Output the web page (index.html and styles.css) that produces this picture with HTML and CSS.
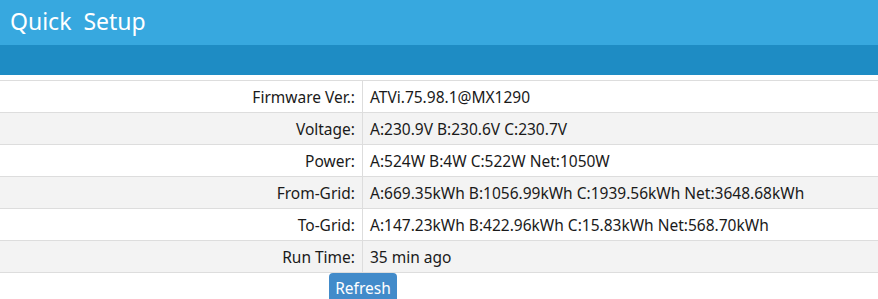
FILE: index.html
```html
<!DOCTYPE html>
<html>
<head>
    <title>Quick Setup</title>
    <link rel="stylesheet" href="styles.css">
</head>
<body>
    <div class="header">
        <h1>Quick&nbsp; Setup</h1>
    </div>
    <div class="subbar"></div>

    <table class="info">
        <tr>
            <td class="label">Firmware Ver.:</td>
            <td>ATVi.75.98.1@MX1290</td>
        </tr>
        <tr>
            <td class="label">Voltage:</td>
            <td>A:230.9V B:230.6V C:230.7V</td>
        </tr>
        <tr>
            <td class="label">Power:</td>
            <td>A:524W B:4W C:522W Net:1050W</td>
        </tr>
        <tr>
            <td class="label">From-Grid:</td>
            <td>A:669.35kWh B:1056.99kWh C:1939.56kWh Net:3648.68kWh</td>
        </tr>
        <tr>
            <td class="label">To-Grid:</td>
            <td>A:147.23kWh B:422.96kWh C:15.83kWh Net:568.70kWh</td>
        </tr>
        <tr>
            <td class="label">Run Time:</td>
            <td>35 min ago</td>
        </tr>
    </table>

    <div class="actions">
        <button class="btn" id="refreshBtn">Refresh</button>
    </div>
</body>
</html>
```

FILE: styles.css
```css
body {
    margin: 0;
    font-family: 'Noto Sans', sans-serif;
    font-size: 15.5px;
    color: #1a1a1a;
    background-color: #ffffff;
}

/* Title bar */
.header {
    background-color: #37a8df;
    height: 45px;
}

.header h1 {
    margin: 0;
    padding-left: 10px;
    font-size: 23px;
    font-weight: 400;
    line-height: 42px;
    color: #ffffff;
}

.subbar {
    background-color: #1e8cc4;
    height: 30px;
    margin-bottom: 5px;
}

/* Status table */
.info {
    width: 100%;
    border-collapse: collapse;
}

.info td {
    height: 31px;
    padding: 0 7px;
    border-top: 1px solid #dddddd;
    white-space: nowrap;
}

.info tr:nth-child(even) td {
    background-color: #f3f3f3;
}

.info td.label {
    width: 348px;
    text-align: right;
    border-right: 1px solid #dddddd;
}

.info tr:last-child td {
    border-bottom: 1px solid #dddddd;
}

.actions {
    padding-left: 329px;
}

.btn {
    display: block;
    width: 68px;
    height: 30px;
    padding: 0;
    border: none;
    border-radius: 4px;
    background-color: #428bca;
    color: #ffffff;
    font-family: inherit;
    font-size: 15.5px;
    cursor: pointer;
}
```
